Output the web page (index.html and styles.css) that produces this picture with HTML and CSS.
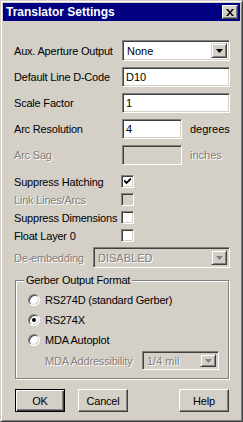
FILE: index.html
```html
<!DOCTYPE html>
<html>
<head>
<meta charset="utf-8">
<link rel="stylesheet" href="styles.css">
</head>
<body>
<div class="window">
  <div class="titlebar">
    <span class="title">Translator Settings</span>
    <span class="close"><svg width="8" height="7" viewBox="0 0 8 7"><path d="M0 0h2l2 2.5L6 0h2L5 3.5 8 7H6L4 4.5 2 7H0l3-3.5z" fill="#000"/></svg></span>
  </div>
  <div class="client">
    <div class="fields">
      <div class="row">
        <span class="lbl w108">Aux. Aperture Output</span>
        <div class="combo w108"><span class="val">None</span><span class="dd"><svg width="7" height="4" viewBox="0 0 7 4"><path d="M0 0h7L3.5 4z" fill="#000"/></svg></span></div>
      </div>
      <div class="row">
        <span class="lbl w108">Default Line D-Code</span>
        <div class="edit w108">D10</div>
      </div>
      <div class="row">
        <span class="lbl w108">Scale Factor</span>
        <div class="edit w108">1</div>
      </div>
      <div class="row">
        <span class="lbl w108">Arc Resolution</span>
        <div class="edit w60">4</div>
        <span class="unit">degrees</span>
      </div>
      <div class="row">
        <span class="lbl w108 dis">Arc Sag</span>
        <div class="edit w60 off"></div>
        <span class="unit dis">inches</span>
      </div>
    </div>
    <div class="checks">
      <div class="crow"><span class="lbl w107">Suppress Hatching</span><span class="cb"><svg width="7" height="7" viewBox="0 0 7 7"><path d="M0 2.5l2.5 2.5L7 0.5" stroke="#000" stroke-width="1.8" fill="none"/></svg></span></div>
      <div class="crow"><span class="lbl w107 dis">Link Lines/Arcs</span><span class="cb off"></span></div>
      <div class="crow"><span class="lbl w107">Suppress Dimensions</span><span class="cb"></span></div>
      <div class="crow"><span class="lbl w107">Float Layer 0</span><span class="cb"></span></div>
    </div>
    <div class="row deemb">
      <span class="lbl w79 dis">De-embedding</span>
      <div class="combo w137 off"><span class="val dis">DISABLED</span><span class="dd"><svg width="7" height="4" viewBox="0 0 7 4"><path d="M0 0h7L3.5 4z" fill="#808080"/></svg></span></div>
    </div>
    <div class="group">
      <span class="legend">Gerber Output Format</span>
      <div class="rrow"><span class="radio"></span><span class="rlbl">RS274D (standard Gerber)</span></div>
      <div class="rrow"><span class="radio on"></span><span class="rlbl">RS274X</span></div>
      <div class="rrow"><span class="radio"></span><span class="rlbl">MDA Autoplot</span></div>
      <div class="mrow">
        <span class="lbl w97 dis">MDA Addressibility</span>
        <div class="combo w77 short off"><span class="val dis">1/4 mil</span><span class="dd"><svg width="7" height="4" viewBox="0 0 7 4"><path d="M0 0h7L3.5 4z" fill="#808080"/></svg></span></div>
      </div>
    </div>
    <div class="buttons">
      <span class="btn default">OK</span>
      <span class="btn cancel">Cancel</span>
      <span class="btn help">Help</span>
    </div>
  </div>
</div>
</body>
</html>
```
FILE: styles.css
```css
* { box-sizing: border-box; }
body {
  margin: 0;
  background: #d4d0c8;
  font-family: "Liberation Sans", Arial, sans-serif;
  font-size: 11px;
  color: #000;
}
.window {
  width: 243px;
  height: 422px;
  background: #d4d0c8;
  border: 1px solid;
  border-color: #d4d0c8 #404040 #404040 #d4d0c8;
  box-shadow: inset 1px 1px 0 #fff, inset -1px -1px 0 #808080;
  padding: 2px;
}
.titlebar {
  height: 18px;
  background: #000080;
  display: flex;
  align-items: center;
  justify-content: space-between;
  padding: 0 2px 0 3px;
}
.title {
  color: #fff;
  font-weight: bold;
  font-size: 12px;
  line-height: 18px;
}
.close {
  width: 16px;
  height: 14px;
  background: #d4d0c8;
  border: 1px solid;
  border-color: #fff #404040 #404040 #fff;
  box-shadow: inset -1px -1px 0 #808080;
  display: flex;
  align-items: center;
  justify-content: center;
  padding-right: 1px;
}
.client {
  padding: 19px 10px 0 11px;
}
.lbl {
  letter-spacing: -0.2px;
  white-space: nowrap;
  flex: none;
}
.dis {
  color: #808080;
  text-shadow: 1px 1px 0 #fff;
}
.w108 { width: 108px; }
.w107 { width: 107px; }
.w79 { width: 79px; }
.w97 { width: 97px; }
.w60 { width: 60px; }
.w137 { width: 137px; }
.w77 { width: 77px; }

.fields {
  display: flex;
  flex-direction: column;
  gap: 6px;
}
.row {
  display: flex;
  align-items: center;
}
.edit, .combo {
  height: 20px;
  border: 1px solid;
  border-color: #808080 #fff #fff #808080;
  box-shadow: inset 1px 1px 0 #404040, inset -1px -1px 0 #d4d0c8;
  background: #fff;
  flex: none;
}
.edit {
  padding: 0 3px;
  line-height: 18px;
}
.combo {
  height: 21px;
  display: flex;
  padding: 2px;
}
.combo .val {
  flex: 1;
  padding-left: 2px;
  line-height: 17px;
}
.combo .dd {
  width: 16px;
  background: #d4d0c8;
  border: 1px solid;
  border-color: #d4d0c8 #404040 #404040 #d4d0c8;
  box-shadow: inset 1px 1px 0 #fff, inset -1px -1px 0 #808080;
  display: flex;
  align-items: center;
  justify-content: center;
}
.off { background: #d4d0c8; }
.unit { margin-left: 8px; }

.checks {
  margin-top: 10px;
  display: flex;
  flex-direction: column;
  gap: 5px;
}
.crow {
  display: flex;
  align-items: center;
  height: 13px;
}
.cb {
  width: 13px;
  height: 13px;
  border: 1px solid;
  border-color: #808080 #fff #fff #808080;
  box-shadow: inset 1px 1px 0 #404040, inset -1px -1px 0 #d4d0c8;
  background: #fff;
  display: flex;
  align-items: center;
  justify-content: center;
  flex: none;
}
.cb.off { background: #d4d0c8; }

.deemb { margin-top: 5px; }

.group {
  position: relative;
  margin: 12px 0 0 1px;
  width: 214px;
  height: 99px;
  border: 1px solid #808080;
  box-shadow: inset 1px 1px 0 #fff, 1px 1px 0 #fff;
  padding: 9px 0 0 12px;
}
.legend {
  position: absolute;
  left: 8px;
  top: -7px;
  padding: 0 2px;
  background: #d4d0c8;
  line-height: 13px;
  letter-spacing: -0.2px;
}
.rrow {
  height: 20px;
  display: flex;
  align-items: center;
}
.radio {
  width: 12px;
  height: 12px;
  border-radius: 50%;
  border: 1px solid;
  border-color: #808080 #fff #fff #808080;
  box-shadow: inset 1px 1px 0 #404040, inset -1px -1px 0 #d4d0c8;
  background: #fff;
  display: flex;
  align-items: center;
  justify-content: center;
  flex: none;
}
.radio.on::after {
  content: "";
  width: 4px;
  height: 4px;
  border-radius: 50%;
  background: #000;
}
.rlbl {
  margin-left: 5px;
  letter-spacing: -0.2px;
  white-space: nowrap;
}
.mrow {
  display: flex;
  align-items: center;
  margin-top: 1px;
  padding-left: 17px;
}
.combo.short { height: 19px; }
.combo.short .val { line-height: 15px; }

.buttons {
  display: flex;
  margin: 10px 0 0 1px;
  width: 214px;
}
.btn {
  width: 50px;
  height: 23px;
  border: 1px solid;
  border-color: #fff #404040 #404040 #fff;
  box-shadow: inset -1px -1px 0 #808080;
  display: flex;
  align-items: center;
  justify-content: center;
  letter-spacing: -0.2px;
}
.btn.default {
  border: 1px solid #000;
  box-shadow: inset 1px 1px 0 #fff, inset -1px -1px 0 #404040, inset -2px -2px 0 #808080;
}
.cancel { margin-left: 13px; }
.help { margin-left: auto; }
```
